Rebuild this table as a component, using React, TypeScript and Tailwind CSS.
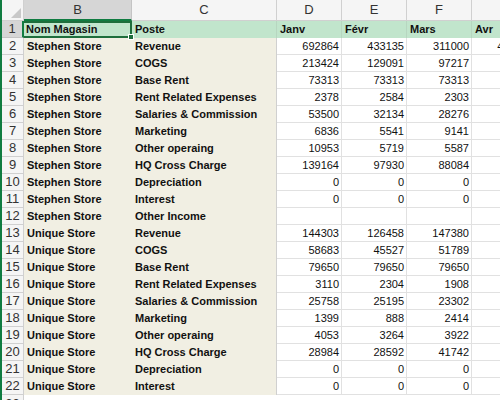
import React from "react";

type Row = { store: string; poste: string; d?: string; e?: string; f?: string; g?: string };

const rows: Row[] = [
  { store: "Stephen Store", poste: "Revenue", d: "692864", e: "433135", f: "311000", g: "452310" },
  { store: "Stephen Store", poste: "COGS", d: "213424", e: "129091", f: "97217" },
  { store: "Stephen Store", poste: "Base Rent", d: "73313", e: "73313", f: "73313" },
  { store: "Stephen Store", poste: "Rent Related Expenses", d: "2378", e: "2584", f: "2303" },
  { store: "Stephen Store", poste: "Salaries & Commission", d: "53500", e: "32134", f: "28276" },
  { store: "Stephen Store", poste: "Marketing", d: "6836", e: "5541", f: "9141" },
  { store: "Stephen Store", poste: "Other operaing", d: "10953", e: "5719", f: "5587" },
  { store: "Stephen Store", poste: "HQ Cross Charge", d: "139164", e: "97930", f: "88084" },
  { store: "Stephen Store", poste: "Depreciation", d: "0", e: "0", f: "0" },
  { store: "Stephen Store", poste: "Interest", d: "0", e: "0", f: "0" },
  { store: "Stephen Store", poste: "Other Income" },
  { store: "Unique Store", poste: "Revenue", d: "144303", e: "126458", f: "147380" },
  { store: "Unique Store", poste: "COGS", d: "58683", e: "45527", f: "51789" },
  { store: "Unique Store", poste: "Base Rent", d: "79650", e: "79650", f: "79650" },
  { store: "Unique Store", poste: "Rent Related Expenses", d: "3110", e: "2304", f: "1908" },
  { store: "Unique Store", poste: "Salaries & Commission", d: "25758", e: "25195", f: "23302" },
  { store: "Unique Store", poste: "Marketing", d: "1399", e: "888", f: "2414" },
  { store: "Unique Store", poste: "Other operaing", d: "4053", e: "3264", f: "3922" },
  { store: "Unique Store", poste: "HQ Cross Charge", d: "28984", e: "28592", f: "41742" },
  { store: "Unique Store", poste: "Depreciation", d: "0", e: "0", f: "0" },
  { store: "Unique Store", poste: "Interest", d: "0", e: "0", f: "0" },
];

const font = { fontFamily: '"Liberation Sans", Arial, sans-serif' };

function NumCell({ v, w }: { v?: string; w: string }) {
  return (
    <div className={`${w} h-full shrink-0 border-r border-b border-[#e1e1e1] bg-white flex items-center justify-end pr-[2px] text-[11px] text-[#111] overflow-visible whitespace-nowrap`}>
      {v}
    </div>
  );
}

export default function App() {
  return (
    <div className="w-[500px] h-[400px] overflow-hidden bg-white flex" style={font}>
      <div className="w-[2px] shrink-0 bg-[#107c41]"></div>
      <div className="flex flex-col">
        {/* column letters */}
        <div className="flex h-[21px] shrink-0 bg-[#f5f5f5] text-[13px] text-[#333]">
          <div className="w-[22px] h-full shrink-0 border-r border-b border-[#d0d0d0] relative">
            <div className="absolute right-[2px] bottom-[2px] w-0 h-0 border-l-[10px] border-l-transparent border-b-[10px] border-b-[#c8c8c8]"></div>
          </div>
          <div className="w-[108px] h-full shrink-0 border-r border-[#c4c4c4] border-b-2 border-b-[#107c41] bg-[#d6d6d6] flex items-center justify-center">B</div>
          <div className="w-[145px] h-full shrink-0 border-r border-b border-[#d0d0d0] flex items-center justify-center">C</div>
          <div className="w-[65px] h-full shrink-0 border-r border-b border-[#d0d0d0] flex items-center justify-center">D</div>
          <div className="w-[65px] h-full shrink-0 border-r border-b border-[#d0d0d0] flex items-center justify-center">E</div>
          <div className="w-[65px] h-full shrink-0 border-r border-b border-[#d0d0d0] flex items-center justify-center">F</div>
          <div className="w-[65px] h-full shrink-0 border-r border-b border-[#d0d0d0]"></div>
        </div>

        {/* row 1 */}
        <div className="flex h-[17px] shrink-0 text-[11px] font-bold text-[#111]">
          <div className="w-[22px] h-full shrink-0 border-r-2 border-r-[#107c41] border-b border-[#c4c4c4] bg-[#d6d6d6] text-[13px] font-normal text-[#333] flex items-center justify-center">1</div>
          <div className="w-[108px] h-full shrink-0 bg-[#c1e5cc] border-2 border-[#1e6e3c] border-l-0 flex items-center pl-[2px] relative">
            Nom Magasin
            <div className="absolute -right-[4px] -bottom-[4px] w-[6px] h-[6px] bg-[#1e6e3c] border border-white z-10"></div>
          </div>
          <div className="w-[145px] h-full shrink-0 bg-[#c1e5cc] border-r border-[#b7d6c0] flex items-center pl-[3px]">Poste</div>
          <div className="w-[65px] h-full shrink-0 bg-[#c1e5cc] border-r border-[#b7d6c0] flex items-center pl-[3px]">Janv</div>
          <div className="w-[65px] h-full shrink-0 bg-[#c1e5cc] border-r border-[#b7d6c0] flex items-center pl-[3px]">Févr</div>
          <div className="w-[65px] h-full shrink-0 bg-[#c1e5cc] border-r border-[#b7d6c0] flex items-center pl-[3px]">Mars</div>
          <div className="w-[65px] h-full shrink-0 bg-[#c1e5cc] border-r border-[#b7d6c0] flex items-center pl-[3px]">Avr</div>
        </div>

        {rows.map((r, i) => (
          <div key={i} className="flex h-[17px] shrink-0">
            <div className="w-[22px] h-full shrink-0 border-r border-b border-[#d0d0d0] bg-[#f5f5f5] text-[13px] text-[#333] flex items-center justify-center">{i + 2}</div>
            <div className="w-[108px] h-full shrink-0 bg-[#f1efe3] flex items-center pl-[3px] text-[11px] font-bold text-[#111] whitespace-nowrap">{r.store}</div>
            <div className="w-[145px] h-full shrink-0 bg-[#f1efe3] border-r border-[#d0d0d0] flex items-center pl-[3px] text-[11px] font-bold text-[#111] whitespace-nowrap">{r.poste}</div>
            <NumCell v={r.d} w="w-[65px]" />
            <NumCell v={r.e} w="w-[65px]" />
            <NumCell v={r.f} w="w-[65px]" />
            <NumCell v={r.g} w="w-[65px]" />
          </div>
        ))}

        <div className="flex h-[17px] shrink-0">
          <div className="w-[22px] h-full shrink-0 border-r border-[#d0d0d0] bg-[#f5f5f5] text-[13px] text-[#333] flex items-center justify-center">23</div>
          <div className="w-[108px] h-full shrink-0 bg-white"></div>
        </div>
      </div>
    </div>
  );
}
